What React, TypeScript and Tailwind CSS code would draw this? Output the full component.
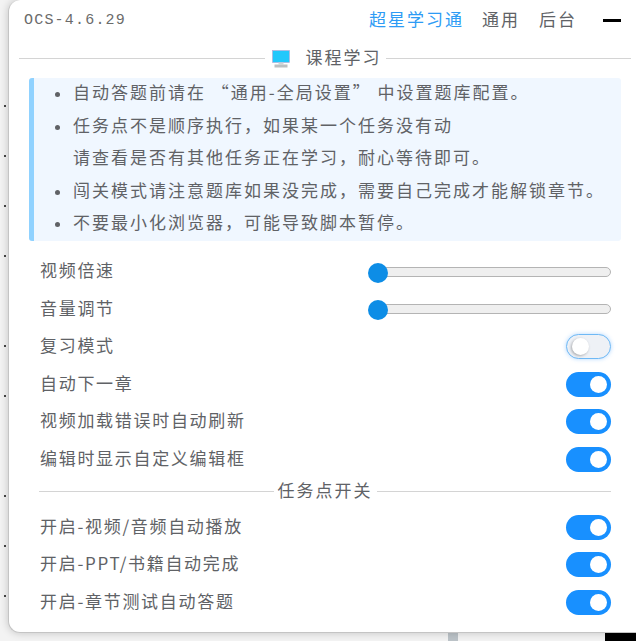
import { ReactNode } from "react";

const FONT = "font-['Noto_Sans_CJK_SC','Noto_Sans',sans-serif]";

const notices = [
  ["自动答题前请在 “通用-全局设置” 中设置题库配置。"],
  ["任务点不是顺序执行，如果某一个任务没有动", "请查看是否有其他任务正在学习，耐心等待即可。"],
  ["闯关模式请注意题库如果没完成，需要自己完成才能解锁章节。"],
  ["不要最小化浏览器，可能导致脚本暂停。"],
];

function Divider({ children }: { children: ReactNode }) {
  return (
    <div className="flex items-center gap-[4px]">
      <div className="h-px flex-1 bg-[#d4d4d4]" />
      {children}
      <div className="h-px flex-1 bg-[#d4d4d4]" />
    </div>
  );
}

function Slider() {
  return (
    <div className="relative h-[10px] w-[242px] rounded-full border border-[#b4b4b4] bg-[#efefef]">
      <div className="absolute -left-[2px] -top-[5px] h-[20px] w-[20px] rounded-full bg-[#0d8de6]" />
    </div>
  );
}

function Toggle({ on }: { on: boolean }) {
  if (!on) {
    return (
      <div className="flex h-[25px] w-[45px] items-center rounded-full border border-[#6fb9f5] bg-[#eef1f6] pl-[5px] shadow-[0_0_4px_rgba(64,158,255,0.4)]">
        <div className="h-[17px] w-[17px] rounded-full bg-white shadow-[-1px_1px_3px_rgba(0,0,0,0.3)]" />
      </div>
    );
  }
  return (
    <div className="flex h-[25px] w-[45px] items-center justify-end rounded-full bg-[#1890ff] pr-[4px]">
      <div className="h-[17px] w-[17px] rounded-full bg-white" />
    </div>
  );
}

function Row({ label, children }: { label: string; children: ReactNode }) {
  return (
    <div className="flex h-[37.5px] items-center justify-between">
      <span className="ml-[1px] -translate-y-[2px] tracking-[1.7px]">{label}</span>
      {children}
    </div>
  );
}

function MonitorIcon() {
  return (
    <svg width="18" height="18" viewBox="0 0 18 18" className="ml-[3px] mr-[12px]">
      <rect x="0.5" y="0.5" width="17" height="12" fill="#22c8fb" stroke="#b9a6d6" strokeWidth="0.6" />
      <rect x="6.5" y="12.5" width="5" height="2" fill="#cfd3d6" />
      <rect x="2.5" y="14.5" width="13" height="3" fill="#bcc0c2" />
    </svg>
  );
}

export default function App() {
  return (
    <div className={`relative h-[641px] w-[636px] overflow-hidden bg-[#f3f3f3] text-[17px] tracking-[2px] text-[#606266] ${FONT}`}>
      {/* page behind the floating window */}
      <div className="absolute bottom-0 left-[448px] h-[8px] w-[10px] bg-[#bcc3c8]" />
      <div className="absolute bottom-0 right-0 h-[8px] w-[31px] bg-black" />
      {[105, 155, 205, 255, 345, 395, 495, 545, 595].map((y) => (
        <div key={y} className="absolute left-[4px] h-[2px] w-[2px] bg-[#444]" style={{ top: y }} />
      ))}

      <div className="relative ml-[8px] h-[633px] w-[640px] rounded-l-[12px] border-b border-l border-[#c4c4c4] bg-white pl-[10px] pr-[24px] shadow-[0_0_8px_rgba(0,0,0,0.2)]">
        <header className="flex h-[41px] items-center justify-between pl-[5px] pr-[3px]">
          <span className="translate-y-[1px] font-['Liberation_Mono',monospace] text-[15px] tracking-[1.2px] text-[#6b6b6b]">OCS-4.6.29</span>
          <div className="flex items-center">
            <span className="-translate-y-[2px] text-[#2d9bf5]">超星学习通</span>
            <span className="ml-[18px] -translate-y-[2px]">通用</span>
            <span className="ml-[19px] -translate-y-[2px]">后台</span>
            <div className="ml-[26px] h-[3px] w-[18px] bg-black" />
          </div>
        </header>

        <div className="-mr-[7px] mt-[5px] h-[24px]">
          <Divider>
            <MonitorIcon />
            <span className="-translate-y-[2px]">课程学习</span>
          </Divider>
        </div>

        <div className="ml-[10px] mt-[8px] w-[592px] rounded-[3px] border-l-[5px] border-[#90d2ff] bg-[#f0f7ff] pl-[21px]">
          <ul>
            {notices.map((lines) => (
              <li key={lines[0]} className="flex leading-[32.5px]">
                <div className="mr-[13px] mt-[14px] h-[5px] w-[5px] shrink-0 rounded-full bg-[#606266]" />
                <div>
                  {lines.map((line) => (
                    <div key={line} className="-translate-y-[2px] whitespace-nowrap">{line}</div>
                  ))}
                </div>
              </li>
            ))}
          </ul>
        </div>

        <div className="ml-[20px] mr-0 mt-[12.5px] w-[572px]">
          <Row label="视频倍速"><Slider /></Row>
          <Row label="音量调节"><Slider /></Row>
          <Row label="复习模式"><Toggle on={false} /></Row>
          <Row label="自动下一章"><Toggle on /></Row>
          <Row label="视频加载错误时自动刷新"><Toggle on /></Row>
          <Row label="编辑时显示自定义编辑框"><Toggle on /></Row>
          <div className="h-[30.5px] pt-[1px]">
            <Divider>
              <span className="-translate-y-[2px]">任务点开关</span>
            </Divider>
          </div>
          <Row label="开启-视频/音频自动播放"><Toggle on /></Row>
          <Row label="开启-PPT/书籍自动完成"><Toggle on /></Row>
          <Row label="开启-章节测试自动答题"><Toggle on /></Row>
        </div>
      </div>
    </div>
  );
}
